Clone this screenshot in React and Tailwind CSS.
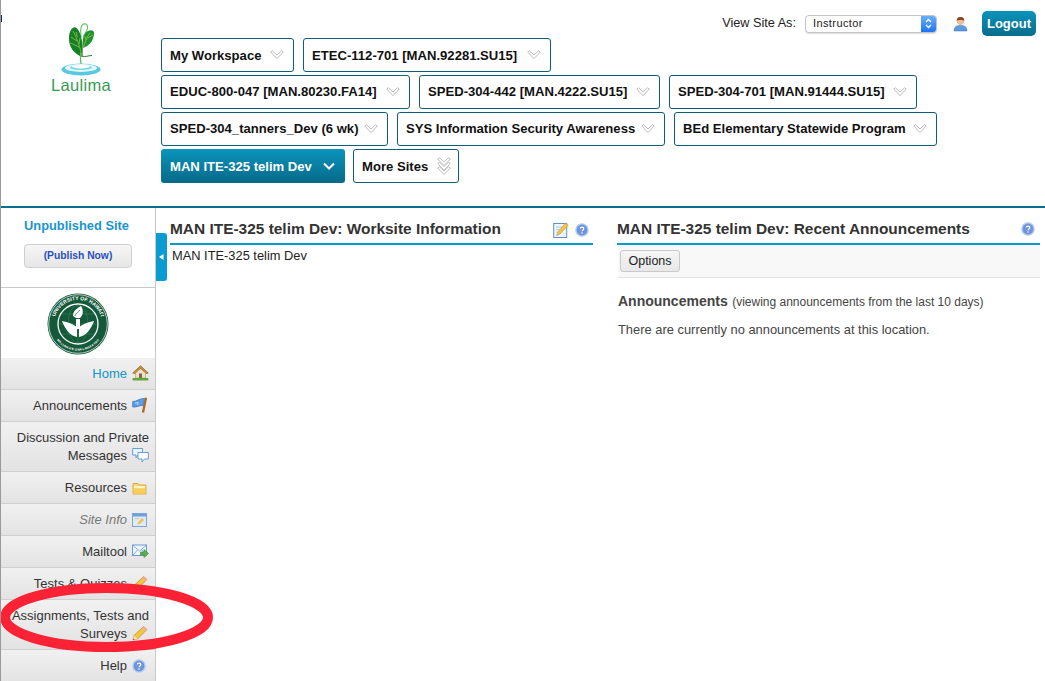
const font = { fontFamily: '"Liberation Sans", Arial, sans-serif' };

function Chevron({ color = "#b5b5b5", double = false, w = 14 }) {
  return (
    <svg width={w} height={double ? 18 : 10} viewBox={double ? "0 0 14 18" : "0 0 14 10"} fill="none" className="shrink-0">
      <path d="M.7 2 L2.5 .8 L7 5 L11.5 .8 L13.3 2 L7 8.7 Z" stroke={color} strokeWidth=".9" fill="#fff" strokeLinejoin="round" />
      {double && <path d="M.7 6.5 L2.5 5.3 L7 9.5 L11.5 5.3 L13.3 6.5 L7 13.2 Z" stroke={color} strokeWidth=".9" fill="#fff" strokeLinejoin="round" />}
      {double && <path d="M.7 11 L2.5 9.8 L7 14 L11.5 9.8 L13.3 11 L7 17.5 Z" stroke={color} strokeWidth=".9" fill="#fff" strokeLinejoin="round" />}
    </svg>
  );
}

function SiteBtn({ label, w, textClass = "" }) {
  return (
    <div className={`h-[34px] rounded-[3px] border border-[#0b5f78] bg-white flex items-center justify-between pl-2 pr-[9px] text-[13.1px] font-bold text-[#111] whitespace-nowrap shrink-0 ${w}`}>
      <span className={textClass}>{label}</span>
      <Chevron />
    </div>
  );
}

function Logo() {
  return (
    <div className="flex flex-col items-center w-[160px] pt-[23px]">
      <svg width="44" height="46" viewBox="0 0 44 46">
        <path d="M22 14 C21 6 22 1 25.5 .7 C29 .7 29.5 5 27 9 C26 11 25 12.5 24 14" stroke="#63bb5c" strokeWidth="1.1" fill="none" />
        <path d="M23.5 34 C15 31 9.5 24 10 14 C10.5 7 14 3.5 16.5 4.5 C21 6 25 19 23.5 34 Z" fill="#168027" />
        <path d="M24 25 C23 17 24.5 10 29 8 C32 6.5 35.5 7 35 11 C34.5 18 30 23 24 25 Z" fill="#1f9130" />
        <path d="M14 8 C18 15 21 24 23 33 M12 14 L18 18 M11.5 20 L20 24 M17 9 L18.5 14 M21 15 L20 21 M31 9.5 C28 14 26 19 24.5 24 M34 12 L28.5 15 M25.5 13 L27.5 17" stroke="#a8cc4c" strokeWidth=".7" fill="none" />
        <path d="M23 33 C26 34.5 29 32.5 33 32.5" stroke="#2a7a30" strokeWidth="1" fill="none" />
        <path d="M21.5 30 C21 35 21.5 39 22.5 44" stroke="#62b558" strokeWidth="1.2" fill="none" />
      </svg>
      <svg width="40" height="13" viewBox="0 0 40 13" className="mt-[-6px]">
        <ellipse cx="20" cy="6.5" rx="19.5" ry="6" fill="#58c8e0" />
        <ellipse cx="20" cy="5" rx="16" ry="3.9" fill="#e4f7fa" />
        <ellipse cx="20" cy="4.5" rx="11" ry="2.6" fill="#7cd6e6" />
        <ellipse cx="20" cy="3.6" rx="9" ry="1.8" fill="#fff" />
      </svg>
      <div className="text-[#379c50] text-[16.5px] leading-[17px] mt-[1px] tracking-[0.3px]" style={font}>Laulima</div>
    </div>
  );
}

function Seal() {
  return (
    <svg width="62" height="62" viewBox="0 0 62 62">
      <circle cx="31" cy="31" r="30.5" fill="#14593a" />
      <circle cx="31" cy="31" r="29.3" fill="none" stroke="#fff" strokeWidth="0.7" />
      <circle cx="31" cy="31" r="20" fill="#14593a" stroke="#fff" strokeWidth="1.3" />
      <defs>
        <path id="sealTop" d="M8.4 39 A24 24 0 1 1 53.6 39" />
        <path id="sealBottom" d="M5 37 A26.7 26.7 0 0 0 57 37" />
      </defs>
      <text fontSize="5.2" fontWeight="700" fill="#fff" textAnchor="middle" style={font}><textPath href="#sealTop" startOffset="50%">UNIVERSITY OF HAWAI'I</textPath></text>
      <text fontSize="3.1" fontWeight="700" fill="#fff" textAnchor="middle" style={font}><textPath href="#sealBottom" startOffset="50%">MA LUNA A'E O NA LAHUI A PAU</textPath></text>
      <ellipse cx="31" cy="31" rx="10" ry="19" fill="none" stroke="#3d8a66" strokeWidth=".5" />
      <path d="M12 31 H50 M31 12 V50 M15 21 H47 M15 41 H47" stroke="#3d8a66" strokeWidth="0.5" />
      <path d="M15 28 C21 29 26 31 30 34 L30 44 C23 43 18 36 15 28 Z M47 28 C41 29 36 31 32 34 L32 44 C39 43 44 36 47 28 Z" fill="#fff" />
      <path d="M26 23 C26 18 29 16 34 13 C37 18 36 22 33 25 L29 25 Z" fill="#fff" />
      <path d="M28 23 C29 20 31 19 33 17" stroke="#14593a" strokeWidth=".7" fill="none" />
      <rect x="29" y="26" width="4" height="10" fill="#fff" />
    </svg>
  );
}

const Home = () => (
  <svg width="17" height="16" viewBox="0 0 17 16">
    <path d="M.7 8 L8.5 .7 L16.3 8 L14 8.7 L8.5 3.7 L3 8.7 Z" fill="#c98a3c" stroke="#8a5a22" strokeWidth=".6" />
    <path d="M3.5 8 L8.5 3.7 L13.5 8 V13 H3.5 Z" fill="#efe3c6" stroke="#a88a5c" strokeWidth=".5" />
    <rect x="7" y="8.5" width="3" height="4.5" fill="#7a6a55" />
    <rect x=".5" y="13" width="16" height="2.5" rx="1" fill="#5faa3a" />
  </svg>
);
const Flag = () => (
  <svg width="16" height="16" viewBox="0 0 16 16">
    <path d="M.7 4.5 C4 5 8 1 12.5 1.5 L11.5 8.5 C8 8 4.5 10.5 .7 10 Z" fill="#5b9ee8" stroke="#2f6bb8" strokeWidth=".7" />
    <path d="M3 6 L6 5.5 L5.5 8" stroke="#c4e0ff" strokeWidth=".9" fill="none" />
    <path d="M14 .8 L11 15.5" stroke="#a86a20" strokeWidth="2.3" />
  </svg>
);
const Chat = () => (
  <svg width="17" height="16" viewBox="0 0 17 16">
    <path d="M.7 1.5 H10.5 V8 H6 L4 11 V8 H.7 Z" fill="#eaf4ff" stroke="#5b93cf" strokeWidth=".9" strokeLinejoin="round" />
    <path d="M6 5.5 H16.3 V12 H12.5 L10 15 V12 H6 Z" fill="#fff" stroke="#5b93cf" strokeWidth=".9" strokeLinejoin="round" />
  </svg>
);
const Folder = () => (
  <svg width="15" height="13" viewBox="0 0 15 13">
    <path d="M1 1.5 H6 L7 3 H14 V12 H1 Z" fill="#f7d873" stroke="#d9a53a" strokeWidth=".9" />
    <rect x="2" y="4" width="11" height="2" fill="#fff3c0" />
    <rect x="1.5" y="7" width="12" height="4.5" fill="#f5cf5a" />
  </svg>
);
const SiteInfo = () => (
  <svg width="15" height="14" viewBox="0 0 15 14">
    <rect x=".5" y=".5" width="14" height="13" fill="#dfeafa" stroke="#7fa5d8" />
    <rect x="1" y="1" width="13" height="2.5" fill="#6f9fe0" />
    <path d="M5 12 L7 8 L10 5 L12 7 L9 10 Z" fill="#f0c050" />
    <rect x="3" y="5" width="4" height="1" fill="#e8c878" />
  </svg>
);
const Mail = () => (
  <svg width="17" height="15" viewBox="0 0 17 15">
    <rect x=".5" y="1" width="14" height="10.5" fill="#eef5ff" stroke="#6a9ad4" />
    <path d="M1 1.5 L7.5 7 L14 1.5 M1 11 L5.5 6 M14 11 L10 6" stroke="#6a9ad4" strokeWidth=".8" fill="none" />
    <path d="M8.5 8 H12 V5.5 L16.5 9.5 L12 13.5 V11 H8.5 Z" fill="#5fb04a" stroke="#3b8a30" strokeWidth=".6" />
  </svg>
);
const Pencil = () => (
  <svg width="16" height="16" viewBox="0 0 16 16">
    <path d="M1 15 L2 10.5 L11.5 1.5 L15 4.5 L5.5 14 Z" fill="#f5c542" stroke="#b98a1f" strokeWidth=".7" strokeLinejoin="round" />
    <path d="M11.5 1.5 L15 4.5 L13.5 6 L10 3 Z" fill="#f3a9a0" />
    <path d="M1 15 L2 10.5 L5.5 14 Z" fill="#f6e3c0" />
    <path d="M1 15 L1.4 13.4 L2.6 14.6 Z" fill="#444" />
  </svg>
);
const Help = ({ s = 14 }) => (
  <svg width={s} height={s} viewBox="0 0 14 14">
    <circle cx="7" cy="7" r="6.8" fill="#b4ccef" />
    <circle cx="7" cy="7" r="5.4" fill="#6d94dc" />
    <path d="M5.3 5.6 C5.3 3.6 8.8 3.6 8.8 5.6 C8.8 7 7 6.8 7 8.3" stroke="#fff" strokeWidth="1.2" fill="none" />
    <circle cx="7" cy="10" r=".8" fill="#fff" />
  </svg>
);
const EditDoc = () => (
  <svg width="16" height="17" viewBox="0 0 16 17">
    <rect x=".7" y="2.5" width="13" height="14" fill="#eef5ff" stroke="#5b93cf" />
    <path d="M3 6 H9 M3 8.5 H8 M3 11 H6" stroke="#9fbde0" strokeWidth=".8" />
    <path d="M3.5 14.5 L5 11 L12.5 2 L15.3 4.3 L7 13 Z" fill="#f5c542" stroke="#b98a1f" strokeWidth=".5" />
  </svg>
);
const User = () => (
  <svg width="15" height="16" viewBox="0 0 15 16">
    <path d="M1 15 C1 10.5 4 9.5 7.5 9.5 C11 9.5 14 10.5 14 15 Z" fill="#5b9be0" stroke="#3a70b0" strokeWidth=".5" />
    <circle cx="7.5" cy="5.5" r="3.6" fill="#eec09a" />
    <path d="M3.8 5 C3.6 1.5 5.5 1 7.5 1 C9.5 1 11.4 1.5 11.2 5 C10 3.6 5 3.6 3.8 5 Z" fill="#8a4a22" />
  </svg>
);

function MenuItem({ h, children, icon, active, italic }) {
  return (
    <div className={`${h} shrink-0 border-b border-[#cfcfcf] bg-gradient-to-b from-[#f1f1f1] to-[#e3e3e3] pl-[8px] pr-[6px] text-right text-[13px] leading-[18px] pt-[7px] ${active ? "text-[#0d96c8]" : italic ? "text-[#777] italic" : "text-[#333]"}`}>
      {children}
      <span className="inline-block align-[-3px] ml-[5px] w-[17px] text-right">{icon}</span>
    </div>
  );
}

export default function App() {
  return (
    <div className="relative w-[1045px] h-[681px] overflow-hidden bg-white flex flex-col border-l border-[#9a9a9a]" style={font}>
      <div className="absolute left-[-1px] top-[15px] w-[2px] h-[7px] bg-[#12285a]" />
      <header className="h-[208px] shrink-0 border-b-2 border-[#0b6f8f] flex">
        <Logo />
        <div className="flex-1 relative">
          <div className="absolute right-[9px] top-[11px] flex items-center">
            <span className="text-[12.7px] text-[#222] mr-[9px]">View Site As:</span>
            <div className="w-[132px] h-[18px] rounded-[4px] border border-[#c4c4c4] bg-white flex items-center justify-between text-[11px] text-[#222] tracking-[0.4px] pl-[7px] overflow-hidden shadow-[0_1px_1px_#ddd]">
              <span>Instructor</span>
              <span className="w-[15px] h-[18px] bg-gradient-to-b from-[#6cb3fa] to-[#1a6ff0] flex items-center justify-center">
                <svg width="7" height="11" viewBox="0 0 7 11" fill="none"><path d="M1 4 L3.5 1.5 L6 4 M1 7 L3.5 9.5 L6 7" stroke="#fff" strokeWidth="1.3" /></svg>
              </span>
            </div>
            <span className="ml-[16px] mr-[14px] flex"><User /></span>
            <div className="w-[54px] h-[25px] rounded-[5px] bg-gradient-to-b from-[#0a94bb] to-[#086d8d] text-white font-bold text-[13px] flex items-center justify-center">Logout</div>
          </div>
          <nav className="pt-[38px] flex flex-col gap-[3px]">
            <div className="flex gap-[9px]">
              <SiteBtn label="My Workspace" w="w-[133px]" textClass="pt-px" />
              <SiteBtn label="ETEC-112-701 [MAN.92281.SU15]" w="w-[248px]" textClass="pt-px" />
            </div>
            <div className="flex gap-[9px]">
              <SiteBtn label="EDUC-800-047 [MAN.80230.FA14]" w="w-[249px]" />
              <SiteBtn label="SPED-304-442 [MAN.4222.SU15]" w="w-[241px]" />
              <SiteBtn label="SPED-304-701 [MAN.91444.SU15]" w="w-[248px]" />
            </div>
            <div className="flex gap-[9px]">
              <SiteBtn label="SPED-304_tanners_Dev (6 wk)" w="w-[227px]" />
              <SiteBtn label="SYS Information Security Awareness" w="w-[268px]" />
              <SiteBtn label="BEd Elementary Statewide Program" w="w-[263px]" />
            </div>
            <div className="flex gap-[8px]">
              <div className="h-[34px] w-[184px] rounded-[3px] bg-gradient-to-b from-[#0a94bb] to-[#086a8a] flex items-center pl-[9px] gap-[11px] text-[13.1px] font-bold text-white whitespace-nowrap">
                <span className="pt-px">MAN ITE-325 telim Dev</span>
                <svg width="12" height="8" viewBox="0 0 12 8" fill="none"><path d="M1 1.5 L6 6.5 L11 1.5" stroke="#fff" strokeWidth="2" /></svg>
              </div>
              <div className="h-[34px] w-[106px] rounded-[3px] border border-[#0b5f78] bg-white flex items-center justify-between pl-2 pr-[7px] text-[13.1px] font-bold text-[#111]">
                <span className="pt-px">More Sites</span>
                <Chevron double />
              </div>
            </div>
          </nav>
        </div>
      </header>

      <div className="flex flex-1 min-h-0">
        <aside className="w-[155px] shrink-0 border-r border-[#c9c9c9] flex flex-col">
          <div className="h-[80px] border-b border-[#c9c9c9] shrink-0 flex flex-col items-center pt-[10px]">
            <div className="text-[#1a94cf] font-bold text-[12.85px] leading-[16px] pr-[3px]">Unpublished Site</div>
            <div className="mt-[10px] w-[108px] h-[24px] rounded-[4px] border border-[#cfcfcf] bg-gradient-to-b from-[#f6f6f6] to-[#e6e6e6] flex items-center justify-center text-[10.3px] font-bold text-[#2a4fc0]">(Publish Now)</div>
          </div>
          <div className="h-[70px] shrink-0 flex justify-center pt-[5px]"><Seal /></div>
          <MenuItem h="h-[32px]" active icon={<Home />}>Home</MenuItem>
          <MenuItem h="h-[32px]" icon={<Flag />}>Announcements</MenuItem>
          <MenuItem h="h-[50px]" icon={<Chat />}>Discussion and Private Messages</MenuItem>
          <MenuItem h="h-[32px]" icon={<Folder />}>Resources</MenuItem>
          <MenuItem h="h-[32px]" italic icon={<SiteInfo />}>Site Info</MenuItem>
          <MenuItem h="h-[32px]" icon={<Mail />}>Mailtool</MenuItem>
          <MenuItem h="h-[32px]" icon={<Pencil />}>Tests &amp; Quizzes</MenuItem>
          <MenuItem h="h-[50px]" icon={<Pencil />}>Assignments, Tests and Surveys</MenuItem>
          <MenuItem h="h-[32px]" icon={<Help />}>Help</MenuItem>
        </aside>

        <main className="flex-1 relative flex pl-[14px] pt-[10px] pr-[5px] gap-[24px] min-w-0">
          <div className="absolute left-0 top-[25px] w-[11px] h-[48px] rounded-r-[3px] bg-[#0a9bd0] flex items-center justify-center">
            <svg width="5" height="6" viewBox="0 0 5 6"><path d="M4.5 0 V6 L0 3 Z" fill="#fff" /></svg>
          </div>
          <section className="w-[423px] shrink-0">
            <div className="h-[27px] border-b-2 border-[#0a9bd0] flex items-start justify-between pr-[4px]">
              <h2 className="text-[15.45px] leading-[21px] font-bold text-[#333]">MAN ITE-325 telim Dev: Worksite Information</h2>
              <span className="flex items-center gap-[6px] pt-[3px]"><EditDoc /><Help /></span>
            </div>
            <p className="text-[12.85px] leading-[16px] text-[#222] pl-[2px] pt-[3px]">MAN ITE-325 telim Dev</p>
          </section>
          <section className="flex-1 min-w-0">
            <div className="h-[27px] border-b-2 border-[#0a9bd0] flex items-start justify-between pr-[5px]">
              <h2 className="text-[15.45px] leading-[21px] font-bold text-[#333]">MAN ITE-325 telim Dev: Recent Announcements</h2>
              <span className="pt-[4px] flex"><Help /></span>
            </div>
            <div className="h-[33px] bg-[#f8f8f8] border-b border-[#e4e4e4] pl-[2px] pt-[5px] ml-px">
              <div className="w-[60px] h-[22px] rounded-[3px] border border-[#c9c9c9] bg-gradient-to-b from-[#f6f6f6] to-[#e8e8e8] text-[12.5px] text-[#222] flex items-center justify-center">Options</div>
            </div>
            <div className="pl-px pt-[13px] text-[#444]">
              <div className="leading-[20px]"><span className="font-bold text-[14px]">Announcements</span> <span className="text-[12px]">(viewing announcements from the last 10 days)</span></div>
              <p className="text-[12.9px] leading-[16px] mt-[10px]">There are currently no announcements at this location.</p>
            </div>
          </section>
        </main>
      </div>

      <svg className="absolute left-[-1px] top-[581px] pointer-events-none" width="216" height="74" viewBox="0 0 216 74">
        <ellipse cx="106.5" cy="36.5" rx="101.5" ry="29.5" fill="none" stroke="#fb2236" strokeWidth="10" />
      </svg>
    </div>
  );
}
